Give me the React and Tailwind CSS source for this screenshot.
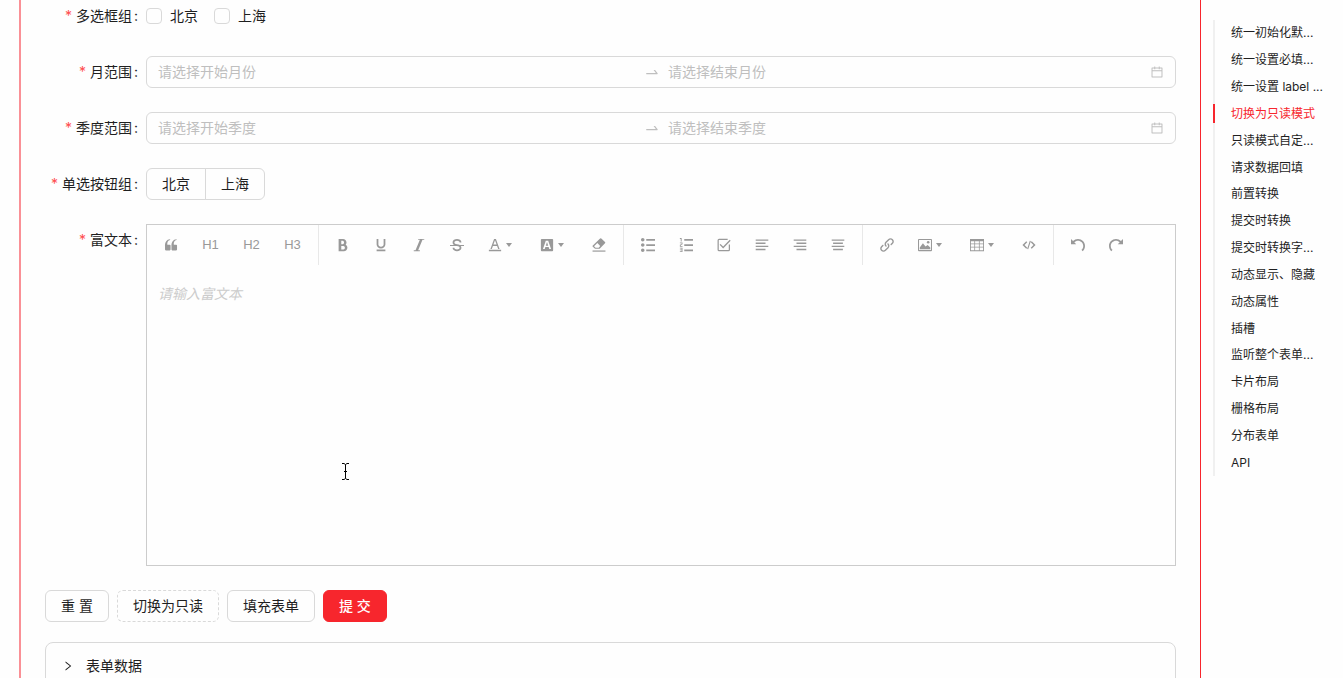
import React, { useState } from 'react';
import { AiOutlineCalendar, AiOutlineRight, AiOutlineSwapRight } from 'react-icons/ai';
import {
  ImBold,
  ImItalic,
  ImLink,
  ImList2,
  ImListNumbered,
  ImRedo,
  ImStrikethrough,
  ImUnderline,
  ImUndo,
} from 'react-icons/im';

const anchors = [
  '统一初始化默...',
  '统一设置必填...',
  '统一设置 label ...',
  '切换为只读模式',
  '只读模式自定...',
  '请求数据回填',
  '前置转换',
  '提交时转换',
  '提交时转换字...',
  '动态显示、隐藏',
  '动态属性',
  '插槽',
  '监听整个表单...',
  '卡片布局',
  '栅格布局',
  '分布表单',
  'API',
];

const cities = ['北京', '上海'];

function Svg({ children }) {
  return (
    <svg viewBox="0 0 1024 1024" className="size-3.5" fill="currentColor">
      {children}
    </svg>
  );
}

const QuoteIcon = () => (
  <Svg>
    <path d="M894.6 907.1H605.4c-32.5 0-59-26.5-59-59V608.2l-4-14.3c0-315.9 125.5-485.1 376.5-507.5v59.8C752.7 180.4 711.3 315.8 711.3 442.4v41.2l31.5 12.3h151.8c32.5 0 59 26.5 59 59v293.2c0 32.5-26.5 59-59 59zM422.6 907.1H133.4c-32.5 0-59-26.5-59-59V608.2l-4-14.3c0-315.9 125.5-485.1 376.5-507.5v59.8C280.7 180.4 239.3 315.8 239.3 442.4v41.2l31.5 12.3h151.8c32.5 0 59 26.5 59 59v293.2c0 32.5-26.5 59-59 59z" />
  </Svg>
);

const ColorIcon = () => (
  <Svg>
    <path d="M64 864h896v96H64zM360.6 576h302.8l81.6 224h102.1L579.2 64H444.8L176.9 800h102.2zM512 160l116.5 320H395.5z" />
  </Svg>
);

const BgColorIcon = () => (
  <Svg>
    <path
      fillRule="evenodd"
      d="M128 64h768a64 64 0 0 1 64 64v768a64 64 0 0 1-64 64H128a64 64 0 0 1-64-64V128a64 64 0 0 1 64-64zM424 192L216 800h128l48-144h240l48 144h128L600 192zM512 288l88 272H424z"
    />
  </Svg>
);

const EraserIcon = () => (
  <Svg>
    <path d="M40 912h944v88H40z" />
    <path
      fillRule="evenodd"
      d="M590 40a64 64 0 0 1 90 0l270 250a64 64 0 0 1 0 90L560 790H220L60 640a64 64 0 0 1 0-90zM390 370L150 610l110 100h230l110-130z"
    />
  </Svg>
);

const TodoIcon = () => (
  <Svg>
    <path d="M780 60H150a110 110 0 0 0-110 110v690a110 110 0 0 0 110 110h690a110 110 0 0 0 110-110V480h-90v380a20 20 0 0 1-20 20H150a20 20 0 0 1-20-20V170a20 20 0 0 1 20-20h630z" />
    <path d="M260 430l190 190L930 130l70 70-550 570-260-270z" />
  </Svg>
);

const AlignLeftIcon = () => (
  <Svg>
    <path d="M768 793.6v102.4H51.2v-102.4h716.8zM972.8 563.2v102.4H51.2v-102.4h921.6zM768 332.8v102.4H51.2v-102.4h716.8zM972.8 102.4v102.4H51.2V102.4h921.6z" />
  </Svg>
);

const AlignRightIcon = () => (
  <Svg>
    <path d="M972.8 793.6v102.4H256v-102.4h716.8zM972.8 563.2v102.4H51.2v-102.4h921.6zM972.8 332.8v102.4H256v-102.4h716.8zM972.8 102.4v102.4H51.2V102.4h921.6z" />
  </Svg>
);

const AlignCenterIcon = () => (
  <Svg>
    <path d="M870.4 793.6v102.4H153.6v-102.4h716.8zM972.8 563.2v102.4H51.2v-102.4h921.6zM870.4 332.8v102.4H153.6v-102.4h716.8zM972.8 102.4v102.4H51.2V102.4h921.6z" />
  </Svg>
);

const ImageIcon = () => (
  <Svg>
    <path
      fillRule="evenodd"
      d="M70 64h884a70 70 0 0 1 70 70v756a70 70 0 0 1-70 70H70a70 70 0 0 1-70-70V134a70 70 0 0 1 70-70zM76 140v744h872V140z"
    />
    <path d="M130 830V690l230-300 190 230 150-110 200 190v130z" />
    <circle cx="745" cy="310" r="95" />
  </Svg>
);

const TableIcon = () => (
  <Svg>
    <path
      fillRule="evenodd"
      d="M0 64h1024v896H0zM64 230v180h252V230zM372 230v180h280V230zM708 230v180h252V230zM64 466v180h252V466zM372 466v180h280V466zM708 466v180h252V466zM64 702v194h252V702zM372 702v194h280V702zM708 702v194h252V702z"
    />
  </Svg>
);

const CodeIcon = () => (
  <Svg>
    <path d="M310 790L32 512l278-278 76 76-202 202 202 202zM714 790l-76-76 202-202-202-202 76-76 278 278zM455 820l-80-20L570 204l80 20z" />
  </Svg>
);

const toolbar = [
  [
    { name: '引用', icon: <QuoteIcon /> },
    { name: 'H1', text: 'H1' },
    { name: 'H2', text: 'H2' },
    { name: 'H3', text: 'H3' },
  ],
  [
    { name: '粗体', icon: <ImBold /> },
    { name: '下划线', icon: <ImUnderline /> },
    { name: '斜体', icon: <ImItalic /> },
    { name: '删除线', icon: <ImStrikethrough /> },
    { name: '文字颜色', icon: <ColorIcon />, menu: true },
    { name: '背景色', icon: <BgColorIcon />, menu: true },
    { name: '清除格式', icon: <EraserIcon /> },
  ],
  [
    { name: '无序列表', icon: <ImList2 /> },
    { name: '有序列表', icon: <ImListNumbered /> },
    { name: '待办', icon: <TodoIcon /> },
    { name: '左对齐', icon: <AlignLeftIcon /> },
    { name: '右对齐', icon: <AlignRightIcon /> },
    { name: '居中对齐', icon: <AlignCenterIcon /> },
  ],
  [
    { name: '插入链接', icon: <ImLink /> },
    { name: '图片', icon: <ImageIcon />, menu: true },
    { name: '表格', icon: <TableIcon />, menu: true },
    { name: '代码块', icon: <CodeIcon /> },
  ],
  [
    { name: '撤销', icon: <ImUndo /> },
    { name: '重做', icon: <ImRedo /> },
  ],
];

function FormItem({ label, htmlFor, children }) {
  return (
    <div className="flex items-start">
      <label
        htmlFor={htmlFor}
        className="flex h-8 w-[101px] shrink-0 items-center justify-end pr-2 whitespace-nowrap"
      >
        <span className="mr-1 text-[#ff4d4f]">*</span>
        {label}
        <span className="ml-0.5">:</span>
      </label>
      <div className="min-w-0 flex-1">{children}</div>
    </div>
  );
}

function RangePicker({ id, start, end }) {
  return (
    <div className="flex h-8 items-center rounded-md border border-[#d9d9d9] px-[11px]">
      <input
        id={id}
        placeholder={start}
        className="min-w-0 flex-1 bg-transparent outline-none placeholder:text-[#bfbfbf]"
      />
      <AiOutlineSwapRight className="mx-2 size-4 text-[#bfbfbf]" />
      <input
        aria-label={end}
        placeholder={end}
        className="min-w-0 flex-1 bg-transparent outline-none placeholder:text-[#bfbfbf]"
      />
      <AiOutlineCalendar className="ml-1 size-3.5 text-[#bfbfbf]" />
    </div>
  );
}

function ToolButton({ item }) {
  return (
    <button
      type="button"
      aria-label={item.name}
      className="flex h-10 items-center px-3 font-['Liberation_Sans',sans-serif] text-[13px] text-[#999] [&>svg]:size-3.5"
    >
      {item.text ? <span className="w-[17px]">{item.text}</span> : item.icon}
      {item.menu && (
        <svg viewBox="0 0 14 14" fill="currentColor">
          <path d="M4 5h6L7 9z" />
        </svg>
      )}
    </button>
  );
}

function RichText({ id }) {
  return (
    <div className="relative border border-[#ccc]">
      <div className="flex flex-wrap pl-[5px]">
        {toolbar.map((group, index) => (
          <div
            key={index}
            className={`flex pr-[5px] ${index > 0 ? 'border-l border-[#e8e8e8] pl-[5px]' : ''}`}
          >
            {group.map((item) => (
              <ToolButton key={item.name} item={item} />
            ))}
          </div>
        ))}
      </div>
      <textarea
        id={id}
        placeholder="请输入富文本"
        className="block h-[300px] w-full resize-none bg-transparent px-[11px] py-[17px] leading-6 outline-none placeholder:text-[#ccc] placeholder:italic"
      />
      <svg viewBox="0 0 9 17" className="absolute top-[238px] left-[194px] h-[17px] w-[9px]" fill="none" stroke="#000">
        <path d="M1 .5h2l1.500 1 1.500-1h2M4.500 1.500v14M1 16.500h2l1.500-1 1.500 1h2M3 8.500h3" />
      </svg>
    </div>
  );
}

function Button({ children, className }) {
  return (
    <button type="button" className={`h-8 rounded-md border px-[15px] ${className}`}>
      {children}
    </button>
  );
}

function App() {
  const [active, setActive] = useState('切换为只读模式');
  const [city, setCity] = useState('');

  return (
    <div className="flex items-stretch bg-[#fefefe] pl-[19px] font-['Inter','Noto_Sans_CJK_SC',sans-serif] text-sm text-[#1f1f1f]">
      <main className="min-w-0 flex-1 border-r border-l-2 border-r-[#f7262d] border-l-[#fa9096] px-6 pb-6">
        <form className="flex flex-col gap-6">
          <FormItem label="多选框组">
            <div className="flex h-8 items-center gap-4">
              {cities.map((item) => (
                <label key={item} className="flex items-center gap-2">
                  <input type="checkbox" className="size-4 appearance-none rounded border border-[#d9d9d9] checked:bg-[#f7262d]" />
                  {item}
                </label>
              ))}
            </div>
          </FormItem>
          <FormItem label="月范围" htmlFor="month">
            <RangePicker id="month" start="请选择开始月份" end="请选择结束月份" />
          </FormItem>
          <FormItem label="季度范围" htmlFor="quarter">
            <RangePicker id="quarter" start="请选择开始季度" end="请选择结束季度" />
          </FormItem>
          <FormItem label="单选按钮组">
            <div className="flex">
              {cities.map((item) => (
                <label
                  key={item}
                  className="-ml-px flex h-8 items-center border border-[#d9d9d9] px-[15px] first:ml-0 first:rounded-l-md last:rounded-r-md has-checked:text-[#f7262d]"
                >
                  <input
                    type="radio"
                    name="city"
                    className="size-0 appearance-none"
                    checked={city === item}
                    onChange={() => setCity(item)}
                  />
                  {item}
                </label>
              ))}
            </div>
          </FormItem>
          <FormItem label="富文本" htmlFor="rich">
            <RichText id="rich" />
          </FormItem>
          <div className="flex gap-2">
            <Button className="border-[#d9d9d9]">重 置</Button>
            <Button className="border-dashed border-[#d9d9d9]">切换为只读</Button>
            <Button className="border-[#d9d9d9]">填充表单</Button>
            <Button className="border-[#f7262d] bg-[#f7262d] font-medium text-white">提 交</Button>
          </div>
        </form>

        <div className="mt-5 rounded-lg border border-[#d9d9d9]">
          <button type="button" className="flex w-full items-center gap-3 px-4 py-3 leading-[22px]">
            <AiOutlineRight className="size-3" />
            表单数据
          </button>
        </div>
      </main>

      <aside className="w-[142px] shrink-0 pt-5 pl-3">
        <nav className="flex h-[456px] flex-col border-l-2 border-[#f0f0f0] text-xs">
          {anchors.map((item) => (
            <a
              key={item}
              href="#"
              onClick={() => setActive(item)}
              className={`relative flex flex-1 items-center pl-4 whitespace-nowrap ${
                item === active ? 'text-[#f7262d]' : ''
              }`}
            >
              {item === active && <span className="absolute -left-0.5 h-[19px] w-0.5 bg-[#f7262d]" />}
              {item}
            </a>
          ))}
        </nav>
      </aside>
    </div>
  );
}

export default App;
